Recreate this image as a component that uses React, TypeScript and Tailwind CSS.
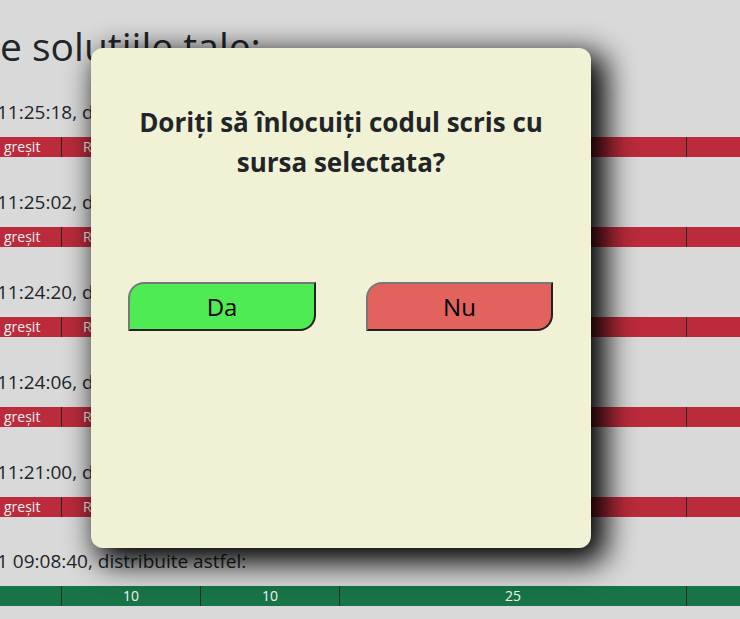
import React from 'react';

type Cell = { w: number; label?: string; pad?: number };

const rows = ['11:25:18', '11:25:02', '11:24:20', '11:24:06', '11:21:00'];

const redCells: Cell[] = [
  { w: 62, label: 'greșit', pad: 4 },
  { w: 139, label: 'Respins', pad: 21 },
  { w: 139 },
  { w: 347 },
  { w: 60 },
];

const greenCells: Cell[] = [
  { w: 62 },
  { w: 139, label: '10' },
  { w: 139, label: '10' },
  { w: 347, label: '25' },
  { w: 60 },
];

function Bar({ cells, color }: { cells: Cell[]; color: string }) {
  return (
    <div className={`flex h-[20px] w-[740px] ${color} text-[14px] leading-[20px] text-[#f4f4f4]`}>
      {cells.map((c, i) => (
        <div
          key={i}
          style={c.pad !== undefined ? { width: c.w, paddingLeft: c.pad } : { width: c.w }}
          className={`h-full shrink-0 overflow-hidden whitespace-nowrap ${
            i < cells.length - 1 ? 'border-r border-[#2a2a2a]' : ''
          } ${c.pad !== undefined ? 'text-left' : 'text-center'}`}
        >
          {c.label}
        </div>
      ))}
    </div>
  );
}

function SubmissionRow({
  time,
  cells,
  color,
  last = false,
}: {
  time: string;
  cells: Cell[];
  color: string;
  last?: boolean;
}) {
  return (
    <div>
      <div className="h-[38px] -ml-[3px] whitespace-nowrap text-[19px] leading-[27px] text-[#212529]">
        {time}, distribuite astfel:
      </div>
      <Bar cells={cells} color={color} />
      <div className={last ? 'h-[31px]' : 'h-[32px]'} />
    </div>
  );
}

export default function App() {
  return (
    <div
      className="relative h-[619px] w-[740px] overflow-hidden bg-[#d9d9d9]"
      style={{ fontFamily: '"Segoe UI", "Open Sans", "Noto Sans", sans-serif' }}
    >
      <div className="pt-[23px]">
        <h2 className="h-[76px] whitespace-nowrap text-[39px] leading-[1.2] font-normal text-[#212529]">
          e soluțiile tale:
        </h2>
        {rows.map((t, i) => (
          <SubmissionRow
            key={t}
            time={t}
            cells={redCells}
            color="bg-[#bb2b3b]"
            last={i === rows.length - 1}
          />
        ))}
        <SubmissionRow time="1 09:08:40" cells={greenCells} color="bg-[#177447]" />
      </div>

      {/* confirm dialog */}
      <div className="absolute left-[91px] top-[48px] flex h-[500px] w-[500px] flex-col rounded-[12px] bg-[#f1f2d5] shadow-[10px_10px_30px_5px_#000]">
        <h4 className="mt-[54px] px-[20px] text-center text-[26px] leading-[40px] font-bold text-[#212529]">
          Doriți să înlocuiți codul scris cu sursa selectata?
        </h4>
        <div className="mt-[100px] flex justify-between pl-[37px] pr-[38px]">
          <button className="h-[49px] w-[188px] rounded-tl-[16px] rounded-br-[16px] border-2 border-t-[#777] border-l-[#777] border-b-[#222] border-r-[#222] bg-[#4feb52] text-[24px] text-black">
            Da
          </button>
          <button className="h-[49px] w-[187px] rounded-tl-[16px] rounded-br-[16px] border-2 border-t-[#777] border-l-[#777] border-b-[#222] border-r-[#222] bg-[#e2635d] text-[24px] text-black">
            Nu
          </button>
        </div>
      </div>
    </div>
  );
}
